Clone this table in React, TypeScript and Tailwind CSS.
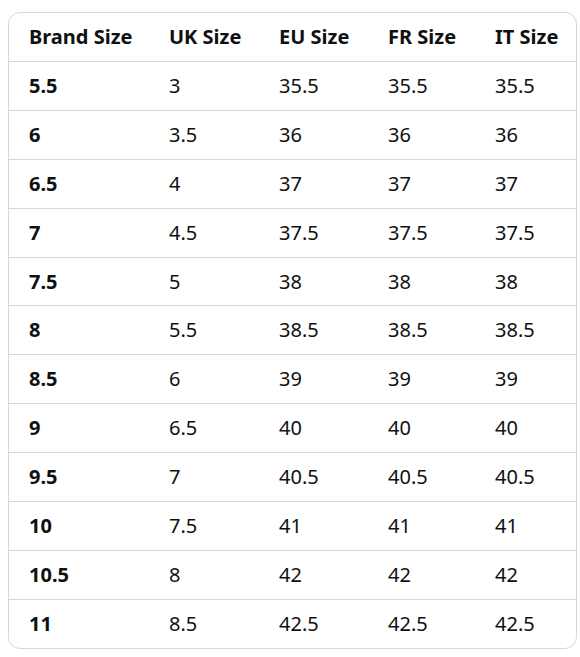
const rows = [
  ["5.5", "3", "35.5", "35.5", "35.5"],
  ["6", "3.5", "36", "36", "36"],
  ["6.5", "4", "37", "37", "37"],
  ["7", "4.5", "37.5", "37.5", "37.5"],
  ["7.5", "5", "38", "38", "38"],
  ["8", "5.5", "38.5", "38.5", "38.5"],
  ["8.5", "6", "39", "39", "39"],
  ["9", "6.5", "40", "40", "40"],
  ["9.5", "7", "40.5", "40.5", "40.5"],
  ["10", "7.5", "41", "41", "41"],
  ["10.5", "8", "42", "42", "42"],
  ["11", "8.5", "42.5", "42.5", "42.5"],
];

const headers = ["Brand Size", "UK Size", "EU Size", "FR Size", "IT Size"];
const widths = ["w-[140px]", "w-[110px]", "w-[109px]", "w-[107px]", "w-[103px]"];

export default function App() {
  return (
    <div className="bg-white min-h-screen pt-3 pl-2 pr-[3px] font-['Noto_Sans',sans-serif] text-[#0f1111]">
      <div className="border border-[#d5d9d9] rounded-xl overflow-hidden">
        <table className="w-full border-collapse table-fixed text-[20px]">
          <thead>
            <tr className="h-[48.5px]">
              {headers.map((h, i) => (
                <th key={h} className={`${widths[i]} text-left font-bold pl-5 pr-1`}>
                  {h}
                </th>
              ))}
            </tr>
          </thead>
          <tbody>
            {rows.map((r) => (
              <tr key={r[0]} className="h-[48.9px] border-t border-[#d5d9d9]">
                {r.map((c, i) => (
                  <td key={i} className={`pl-5 pr-1 ${i === 0 ? "font-bold" : ""}`}>
                    {c}
                  </td>
                ))}
              </tr>
            ))}
          </tbody>
        </table>
      </div>
    </div>
  );
}
